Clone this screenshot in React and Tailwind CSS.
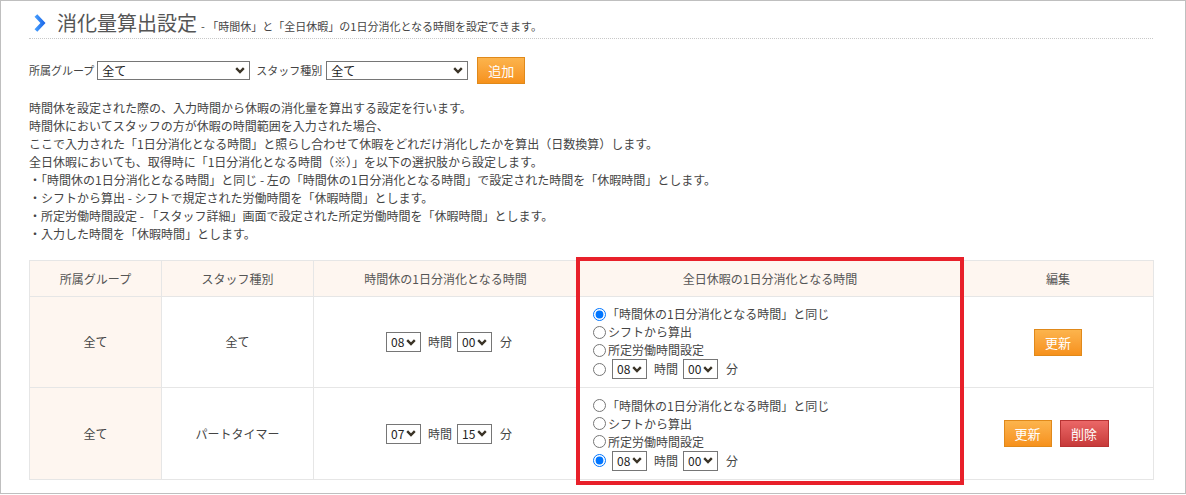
import React from "react";

function Caret() {
  return (
    <svg width="10" height="7" viewBox="0 0 10 7" className="shrink-0">
      <path d="M1.2 1.2 L5 5 L8.8 1.2" fill="none" stroke="#3a3326" strokeWidth="2.4" />
    </svg>
  );
}

function Sel({ value, cls }) {
  return (
    <div
      className={
        "inline-flex items-center justify-between border border-[#767676] bg-white text-[#222] pl-[4px] pr-[4px] " +
        cls
      }
    >
      <span className="leading-none">{value}</span>
      <Caret />
    </div>
  );
}

function TimeSel({ value }) {
  return <Sel value={value} cls="w-[35px] h-[20px] text-[12px] pl-[3px] pr-[3px]" />;
}

function TimePick({ h, m }) {
  return (
    <div className="inline-flex items-center text-[12px] text-[#444]">
      <TimeSel value={h} />
      <span className="ml-[7px] mr-[5px]">時間</span>
      <TimeSel value={m} />
      <span className="ml-[8px]">分</span>
    </div>
  );
}

function Radio({ name, checked }) {
  return (
    <input
      type="radio"
      name={name}
      defaultChecked={checked}
      className="m-0 w-[13px] h-[13px] shrink-0"
    />
  );
}

function RadioGroup({ name, sel }) {
  return (
    <div className="flex flex-col text-[12px] text-[#444] pl-[15px]">
      <label className="flex items-center h-[18px] gap-[1px]">
        <Radio name={name} checked={sel === 0} />
        <span>「時間休の1日分消化となる時間」と同じ</span>
      </label>
      <label className="flex items-center h-[18px] gap-[2px]">
        <Radio name={name} checked={sel === 1} />
        <span>シフトから算出</span>
      </label>
      <label className="flex items-center h-[18px] gap-[2px]">
        <Radio name={name} checked={sel === 2} />
        <span>所定労働時間設定</span>
      </label>
      <label className="flex items-center h-[20px] gap-[6px]">
        <Radio name={name} checked={sel === 3} />
        <TimePick h="08" m="00" />
      </label>
    </div>
  );
}

function OrangeBtn({ children }) {
  return (
    <button className="w-[48px] h-[27px] border border-[#e0891a] bg-linear-to-b from-[#fcb44c] to-[#f6911a] text-white text-[13px] leading-none">
      {children}
    </button>
  );
}

function RedBtn({ children }) {
  return (
    <button className="w-[49px] h-[27px] border border-[#b83333] bg-linear-to-b from-[#eb6767] to-[#c73a3a] text-white text-[13px] leading-none">
      {children}
    </button>
  );
}

export default function App() {
  const th =
    "border border-[#e6e6e6] bg-[#fef6f0] font-normal text-[12px] text-[#555] text-center align-middle";
  const td = "border border-[#e6e6e6] text-[12px] text-[#444] text-center align-middle";
  return (
    <div className="w-[1186px] h-[494px] box-border border border-[#bfbfbf] bg-white pl-[28px] font-['Noto_Sans_CJK_JP',sans-serif] text-[#444]">
      <div className="w-[1124px]">
        {/* Title */}
        <div className="pt-[10px] pb-[3px] pl-[5px] flex items-end border-b border-dotted border-[#c8c8c8]">
          <svg width="12" height="18" viewBox="0 0 12 18" className="mb-[3px] shrink-0">
            <defs>
              <linearGradient id="chev" x1="0" y1="0" x2="1" y2="0">
                <stop offset="0" stopColor="#4aa3ff" />
                <stop offset="1" stopColor="#1660e6" />
              </linearGradient>
            </defs>
            <path d="M0.5 2.8 L3.3 0.3 L11.5 9 L3.3 17.7 L0.5 15.2 L6.4 9 Z" fill="url(#chev)" />
          </svg>
          <h1 className="ml-[11px] text-[20px] leading-[24px] text-[#555] font-normal">消化量算出設定</h1>
          <span className="ml-[4px] mb-[2px] text-[11px] leading-[14px] text-[#444]">
            - 「時間休」と「全日休暇」の1日分消化となる時間を設定できます。
          </span>
        </div>

        {/* Filter row */}
        <div className="mt-[18px] flex items-center h-[27px] text-[11px] text-[#444]">
          <span>所属グループ</span>
          <Sel value="全て" cls="ml-[3px] w-[153px] h-[19px] text-[12px]" />
          <span className="ml-[6px]">スタッフ種別</span>
          <Sel value="全て" cls="ml-[4px] w-[142px] h-[19px] text-[12px]" />
          <button className="ml-[9px] w-[48px] h-[27px] border border-[#e0891a] bg-linear-to-b from-[#fcb44c] to-[#f6911a] text-white text-[13px] leading-none">
            追加
          </button>
        </div>

        {/* Description */}
        <div className="mt-[15px] text-[12px] leading-[18px] text-[#444]">
          <p>時間休を設定された際の、入力時間から休暇の消化量を算出する設定を行います。</p>
          <p>時間休においてスタッフの方が休暇の時間範囲を入力された場合、</p>
          <p>ここで入力された「1日分消化となる時間」と照らし合わせて休暇をどれだけ消化したかを算出（日数換算）します。</p>
          <p>全日休暇においても、取得時に「1日分消化となる時間（※）」を以下の選択肢から設定します。</p>
          <p>・「時間休の1日分消化となる時間」と同じ - 左の「時間休の1日分消化となる時間」で設定された時間を「休暇時間」とします。</p>
          <p>・シフトから算出 - シフトで規定された労働時間を「休暇時間」とします。</p>
          <p>・所定労働時間設定 - 「スタッフ詳細」画面で設定された所定労働時間を「休暇時間」とします。</p>
          <p>・入力した時間を「休暇時間」とします。</p>
        </div>

        {/* Table */}
        <div className="relative mt-[17px]">
          <table className="w-[1124px] table-fixed border-collapse">
            <colgroup>
              <col className="w-[132px]" />
              <col className="w-[152px]" />
              <col className="w-[264px]" />
              <col className="w-[385px]" />
              <col className="w-[191px]" />
            </colgroup>
            <thead>
              <tr className="h-[36px]">
                <th className={th}>所属グループ</th>
                <th className={th}>スタッフ種別</th>
                <th className={th}>時間休の1日分消化となる時間</th>
                <th className={th}>全日休暇の1日分消化となる時間</th>
                <th className={th}>編集</th>
              </tr>
            </thead>
            <tbody>
              <tr className="h-[91px]">
                <td className={td + " bg-[#fef6f0]"}>全て</td>
                <td className={td}>全て</td>
                <td className={td + " pl-[7px]"}>
                  <TimePick h="08" m="00" />
                </td>
                <td className={td + " text-left"}>
                  <RadioGroup name="r1" sel={0} />
                </td>
                <td className={td}>
                  <OrangeBtn>更新</OrangeBtn>
                </td>
              </tr>
              <tr className="h-[92px]">
                <td className={td + " bg-[#fef6f0]"}>全て</td>
                <td className={td}>パートタイマー</td>
                <td className={td + " pl-[7px]"}>
                  <TimePick h="07" m="15" />
                </td>
                <td className={td + " text-left"}>
                  <RadioGroup name="r2" sel={3} />
                </td>
                <td className={td}>
                  <div className="flex items-center justify-center gap-[8px] pr-[4px]">
                    <OrangeBtn>更新</OrangeBtn>
                    <RedBtn>削除</RedBtn>
                  </div>
                </td>
              </tr>
            </tbody>
          </table>
          {/* annotation overlay */}
          <div className="absolute left-[547px] top-[-3px] w-[388px] h-[228px] border-[4px] border-[#e8202a] pointer-events-none" />
        </div>
      </div>
    </div>
  );
}
